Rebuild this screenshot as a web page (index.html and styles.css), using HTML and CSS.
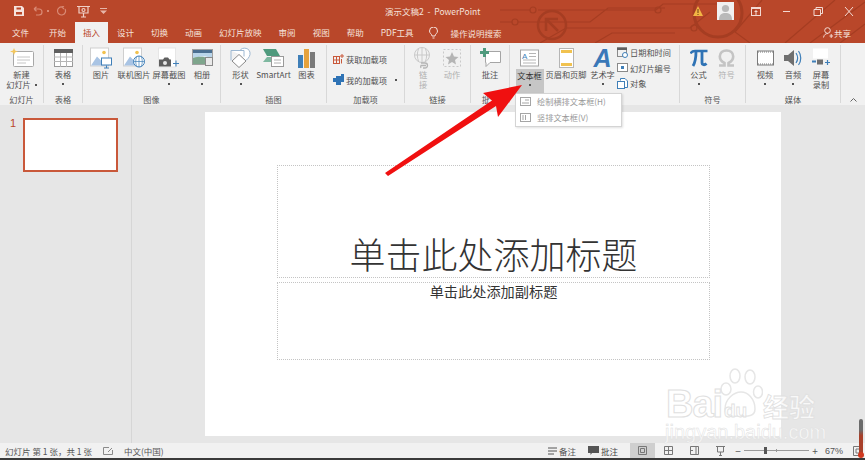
FILE: index.html
```html
<!DOCTYPE html>
<html lang="zh-CN">
<head>
    <meta charset="UTF-8">
    <title>演示文稿2 - PowerPoint</title>
    <link rel="stylesheet" href="styles.css">
</head>
<body>
<div class="app">
    <div class="head">
        <svg class="circuit" width="365" height="43" viewBox="0 0 365 43" fill="none" stroke="#a53d22" stroke-width="1.2">
            <path d="M0 10H30M38 10H156L163 4H230M0 22H12M18 22H90L108 8H165"/>
            <path d="M40 43L66 28H190L210 12M95 43L112 33H175M262 0L235 32L250 43M285 43L335 0M310 43L365 2M340 43L365 24"/>
            <circle cx="33" cy="10" r="3"/><circle cx="15" cy="22" r="3"/><circle cx="194" cy="28" r="3"/><circle cx="158" cy="10" r="3"/>
            <circle cx="52" cy="25" r="14" stroke-width="2.5"/>
            <path d="M46 31V19H58M46 19L58 31" stroke-width="2.5"/>
            <circle cx="218" cy="13" r="24" stroke-width="3"/>
        </svg>
        <div class="titlebar">
            <div class="qat">
                <svg width="10" height="10" viewBox="0 0 10 10"><path d="M0 0H8L10 2V10H0Z" fill="#f6e3dd"/><path d="M2.500 1.500H7V3.500H2.500ZM2 6H8V8.500H2Z" fill="#b9472a"/></svg>
                <svg width="10" height="10" viewBox="0 0 10 10" fill="none" stroke="#d98a75" stroke-width="1.2"><path d="M1 3H6A3 3 0 0 1 6 9H3M1 3L3.500 .8M1 3L3.500 5.200"/></svg>
                <span class="qat-dot"></span>
                <svg width="10" height="10" viewBox="0 0 10 10" fill="none" stroke="#d98a75" stroke-width="1.2"><path d="M8 3A4 4 0 1 1 5 1M5 1L7 0M5 1L7 3"/></svg>
                <svg class="qat-show" width="13" height="13" viewBox="0 0 13 13" fill="none" stroke="#f0cfc6" stroke-width="1.2"><path d="M0 1.500H13M2 2V8H11V2M6.500 8V12M4 12H9"/><circle cx="6.500" cy="5" r="1.500"/></svg>
                <svg class="qat-more" width="7" height="6" viewBox="0 0 7 6" fill="#e6b5a8"><path d="M0 0H7V1H0ZM0 2.500H7L3.500 6Z"/></svg>
            </div>
            <div class="doc-title">演示文稿2&nbsp; - &nbsp;PowerPoint</div>
            <div class="win">
                <svg class="warn" width="10" height="10" viewBox="0 0 10 10"><path d="M5 0L10 10H0Z" fill="#f2b544"/><path d="M4.500 3H5.500V7H4.500ZM4.500 8H5.500V9H4.500Z" fill="#6b3a10"/></svg>
                <svg class="avatar" width="17" height="18" viewBox="0 0 17 18"><rect width="17" height="18" fill="#f1f1f1"/><circle cx="8.500" cy="6.500" r="3.600" fill="#b9b9b9"/><path d="M2 18C2 12 5 11 8.500 11S15 12 15 18Z" fill="#b9b9b9"/></svg>
                <svg class="ctl" width="10" height="9" viewBox="0 0 10 9"><rect x=".5" y=".5" width="9" height="8" fill="none" stroke="#f3d9d2"/><path d="M0 0H10V2H0ZM5 3L7 5H3ZM4.500 5H5.500V8H4.500Z" fill="#f3d9d2"/></svg>
                <svg class="ctl" width="10" height="9" viewBox="0 0 10 9"><path d="M1 4.500H8" stroke="#f3d9d2"/></svg>
                <svg class="ctl" width="10" height="9" viewBox="0 0 10 9" fill="none" stroke="#f3d9d2"><path d="M3 2V.5H9.500V6.500H8M1 2.500H7.500V8.500H1Z"/></svg>
                <svg class="ctl" width="10" height="9" viewBox="0 0 10 9" stroke="#f3d9d2"><path d="M1 0L9 9M9 0L1 9"/></svg>
            </div>
        </div>
        <div class="tabs">
            <span class="tab tab-file">文件</span>
            <span class="tab">开始</span>
            <span class="tab active">插入</span>
            <span class="tab">设计</span>
            <span class="tab">切换</span>
            <span class="tab">动画</span>
            <span class="tab">幻灯片放映</span>
            <span class="tab">审阅</span>
            <span class="tab">视图</span>
            <span class="tab">帮助</span>
            <span class="tab">PDF工具</span>
            <span class="tell">
                <svg width="9" height="12" viewBox="0 0 9 12" fill="none" stroke="#f5e2dc"><path d="M3 9C3 7 .5 6.500 .5 4A4 4 0 0 1 8.500 4C8.500 6.500 6 7 6 9ZM3.500 11H5.500"/></svg>
                操作说明搜索
            </span>
            <span class="share">
                <svg width="10" height="11" viewBox="0 0 10 11" fill="none" stroke="#f3d9d2"><circle cx="4.500" cy="3.500" r="2.800"/><path d="M.5 10.500C1 7.500 3 6.500 5 6.500M6.500 9H10M8.200 7V11"/></svg>
                共享
            </span>
        </div>
    </div>

    <div class="ribbon">
        <div class="group g-slide">
            <div class="btns">
                <div class="btn">
                    <svg class="ico" width="24" height="20" viewBox="0 0 24 20"><rect x="3.500" y="3.500" width="20" height="15" rx="1" fill="#fff" stroke="#a8a8a8"/><path d="M7 9H20M7 12H20M7 15H16" stroke="#c6c6c6"/><path d="M4 0L5 2.500L8 3.500L5 4.500L4 7L3 4.500L0 3.500L3 2.500Z" fill="#f3c65c"/></svg>
                    <span>新建<br>幻灯片<i class="dot inline"></i></span>
                </div>
            </div>
            <div class="glabel">幻灯片</div>
        </div>
        <div class="group g-table">
            <div class="btns">
                <div class="btn">
                    <svg class="ico" width="19" height="18" viewBox="0 0 19 18"><rect x=".5" y=".5" width="18" height="17" fill="#fff" stroke="#9a9a9a"/><rect width="19" height="4" fill="#5f5f5f"/><path d="M0 8H19M0 12.500H19M6.500 4V18M12.500 4V18" stroke="#b5b5b5"/></svg>
                    <span>表格</span><i class="dot"></i>
                </div>
            </div>
            <div class="glabel">表格</div>
        </div>
        <div class="group g-image">
            <div class="btns">
                <div class="btn">
                    <svg class="ico" width="22" height="21" viewBox="0 0 22 21"><rect x=".5" y=".5" width="18" height="18" fill="#fff" stroke="#cfcfcf"/><path d="M1 18L7 9L12 14L14 12L18 18Z" fill="#a9c4e4"/><circle cx="14" cy="5" r="1.800" fill="#f1c24f"/><rect x="11.500" y="10.500" width="10" height="7" fill="#fff" stroke="#3f7fb8"/><path d="M16.500 18V20.500M14 20.500H19" stroke="#3f7fb8"/></svg>
                    <span>图片</span>
                </div>
                <div class="btn">
                    <svg class="ico" width="22" height="21" viewBox="0 0 22 21"><rect x=".5" y=".5" width="18" height="18" fill="#fff" stroke="#cfcfcf"/><path d="M1 18L7 9L12 14L14 12L18 18Z" fill="#a9c4e4"/><circle cx="14" cy="5" r="1.800" fill="#f1c24f"/><circle cx="16" cy="14" r="5.500" fill="#fff" stroke="#3f7fb8"/><path d="M10.500 14H21.500M16 8.500V19.500M13.500 9.500C12.500 12 12.500 16 13.500 18.500M18.500 9.500C19.500 12 19.500 16 18.500 18.500" stroke="#3f7fb8" fill="none" stroke-width=".7"/></svg>
                    <span>联机图片</span>
                </div>
                <div class="btn">
                    <svg class="ico" width="22" height="21" viewBox="0 0 22 21"><rect x=".5" y=".5" width="17" height="19" fill="#fff" stroke="#e6e6e6"/><path d="M1 12H5L6.500 10H10L11.500 12H13V19H1Z" fill="#5f5f5f"/><circle cx="7" cy="15.500" r="2" fill="#e8e8e8"/><path d="M15 16H21M18 13V19" stroke="#3f7fb8"/></svg>
                    <span>屏幕截图</span><i class="dot"></i>
                </div>
                <div class="btn">
                    <svg class="ico" width="21" height="18" viewBox="0 0 21 18"><rect x=".5" y=".5" width="20" height="15" fill="#fff" stroke="#a0a0a0"/><rect x="1" y="1" width="19" height="3" fill="#4b6f91"/><path d="M1 4H20V9C15 7 8 7 1 9Z" fill="#b9d5ea"/><path d="M1 9C8 7 12 8 15 9V15H1Z" fill="#7ea58c"/><rect x="13.500" y="8.500" width="7" height="8" fill="#e9e9e9" stroke="#8a8a8a"/></svg>
                    <span>相册</span><i class="dot"></i>
                </div>
            </div>
            <div class="glabel">图像</div>
        </div>
        <div class="group g-illus">
            <div class="btns">
                <div class="btn">
                    <svg class="ico" width="22" height="21" viewBox="0 0 22 21" fill="#fff" stroke="#9db8d2"><path d="M10 3C12 -1 21 0 20 7C19.500 10 17 12 15 14"/><path d="M1 3H14V9"/><path d="M1 3V13"/><path d="M9 7L16 13.500L9 20L2 13.500Z" stroke="#8a8a8a"/></svg>
                    <span>形状</span><i class="dot"></i>
                </div>
                <div class="btn">
                    <svg class="ico" width="21" height="20" viewBox="0 0 21 20"><path d="M0 1H13L17 8H4Z" fill="#4f9a7d"/><path d="M4 9H11L8 14H0Z" fill="#7eb8a0"/><rect x="8.500" y="8.500" width="12" height="10" fill="#fff" stroke="#9a9a9a"/><path d="M11 12H18M11 15H18" stroke="#b0b0b0"/></svg>
                    <span>SmartArt</span>
                </div>
                <div class="btn">
                    <svg class="ico" width="17" height="20" viewBox="0 0 17 20"><rect y="7" width="5" height="13" fill="#3f7fb8"/><rect x="6" y="1" width="5" height="19" fill="#e6a23c"/><rect x="12" y="4" width="5" height="16" fill="#7a7a7a"/></svg>
                    <span>图表</span>
                </div>
            </div>
            <div class="glabel">插图</div>
        </div>
        <div class="group g-addin">
            <div class="rows">
                <div class="row">
                    <svg width="11" height="10" viewBox="0 0 11 10" fill="none" stroke="#c9583a"><rect x=".5" y="2.500" width="6" height="7"/><path d="M.5 6H6.500M3.500 2.500V9.500M9 0V4M7 2H11M8.500 5V9.500"/></svg>
                    获取加载项
                </div>
                <div class="row">
                    <svg width="11" height="11" viewBox="0 0 11 11" fill="#2f73b5"><path d="M3 2H8V0H11V8H8V11H3V8H0V4H3Z"/></svg>
                    我的加载项<i class="dot caret"></i>
                </div>
            </div>
            <div class="glabel">加载项</div>
        </div>
        <div class="group g-link">
            <div class="btns">
                <div class="btn off">
                    <svg class="ico" width="18" height="22" viewBox="0 0 18 22" fill="none" stroke="#c9c9c9"><circle cx="8" cy="8" r="7.500"/><path d="M.5 8H15.500M8 .5V15.500M4.500 2C3 5 3 11 4.500 14M11.500 2C13 5 13 11 11.500 14"/><path d="M7 16H11A2.500 2.500 0 0 1 11 21H9M12 18.500H7A2.500 2.500 0 0 0 7 21" stroke="#b5b5b5" stroke-width="1.300"/></svg>
                    <span>链<br>接</span>
                </div>
                <div class="btn off">
                    <svg class="ico" width="18" height="18" viewBox="0 0 18 18"><rect x=".5" y=".5" width="17" height="17" fill="none" stroke="#c9c9c9" stroke-dasharray="2 2"/><path d="M9 3L11 7.500L15.500 8L12 11L13 15.500L9 13L5 15.500L6 11L2.500 8L7 7.500Z" fill="#b5b5b5"/></svg>
                    <span>动作</span>
                </div>
            </div>
            <div class="glabel">链接</div>
        </div>
        <div class="group g-comment">
            <div class="btns">
                <div class="btn">
                    <svg class="ico" width="21" height="20" viewBox="0 0 21 20"><path d="M5.500 3.500H20.500V14.500H10L6 18.500V14.500H5.500Z" fill="#fff" stroke="#a5a5a5"/><path d="M3 0H6V3H9V6H6V9H3V6H0V3H3Z" fill="#4f9a7d"/></svg>
                    <span>批注</span>
                </div>
            </div>
            <div class="glabel">批注</div>
        </div>
        <div class="group g-text">
            <div class="btns">
                <div class="btn">
                    <svg class="ico" width="19" height="17" viewBox="0 0 19 17"><rect x=".5" y=".5" width="18" height="16" fill="#fff" stroke="#a5a5a5"/><path d="M9 4H16M9 7H16M3 10.500H16M3 13.500H16" stroke="#b5b5b5"/><text x="2" y="9" class="ico-a">A</text></svg>
                    <span class="btn-on">文本框<i class="dot"></i></span>
                </div>
                <div class="btn">
                    <svg class="ico" width="15" height="20" viewBox="0 0 15 20"><rect x=".5" y=".5" width="14" height="19" fill="#fff" stroke="#b5b5b5"/><rect x="2" y="2" width="11" height="3" fill="#f1c24f"/><rect x="2" y="15" width="11" height="3" fill="#f1c24f"/></svg>
                    <span>页眉和页脚</span>
                </div>
                <div class="btn">
                    <div class="art ico">A</div>
                    <span>艺术字</span><i class="dot"></i>
                </div>
                <div class="rows small">
                    <div class="row">
                        <svg width="11" height="11" viewBox="0 0 11 11" fill="none" stroke="#8a8a8a"><rect x=".5" y=".5" width="9" height="9"/><path d="M0 2H10" stroke="#5f5f5f" stroke-width="2"/><circle cx="8" cy="8" r="2.500" fill="#fff" stroke="#3f7fb8"/></svg>
                        日期和时间
                    </div>
                    <div class="row">
                        <svg width="11" height="9" viewBox="0 0 11 9"><rect x=".5" y=".5" width="10" height="8" fill="#fff" stroke="#8a8a8a"/><rect x="4" y="3" width="3" height="3" fill="#3f7fb8"/></svg>
                        幻灯片编号
                    </div>
                    <div class="row">
                        <svg width="11" height="11" viewBox="0 0 11 11" fill="#fff" stroke="#3f7fb8"><path d="M3.500 2.500V.5H8L10.500 3V9.500H8"/><rect x=".5" y="3.500" width="7" height="7"/></svg>
                        对象
                    </div>
                </div>
            </div>
            <div class="glabel"></div>
        </div>
        <div class="group g-symbol">
            <div class="btns">
                <div class="btn">
                    <svg class="ico" width="18" height="18" viewBox="0 0 18 18" fill="none" stroke="#2f73b5"><path d="M.5 4.500C1.500 2.500 3 2 5 2H17.500" stroke-width="2.400"/><path d="M6 2.500C6 8 5.500 13 3 17" stroke-width="2.800"/><path d="M12 2.500V13.500C12 16 14.500 16.500 16.500 14.500" stroke-width="2.800"/></svg>
                    <span>公式</span><i class="dot"></i>
                </div>
                <div class="btn off">
                    <svg class="ico" width="17" height="18" viewBox="0 0 17 18" fill="none" stroke="#c4c4c4" stroke-width="2.600"><path d="M1 16.500H6.500V14C3.500 12.500 1.800 10.500 1.800 7.500C1.800 3.500 4.800 1.500 8.500 1.500S15.200 3.500 15.200 7.500C15.200 10.500 13.500 12.500 10.500 14V16.500H16"/></svg>
                    <span>符号</span>
                </div>
            </div>
            <div class="glabel">符号</div>
        </div>
        <div class="group g-media">
            <div class="btns">
                <div class="btn">
                    <svg class="ico" width="17" height="15" viewBox="0 0 17 15"><rect x=".5" y=".5" width="16" height="14" fill="#fff" stroke="#7a7a7a"/><path d="M1 1.500H16M1 13.500H16" stroke="#7a7a7a" stroke-dasharray="1 1"/></svg>
                    <span>视频</span><i class="dot"></i>
                </div>
                <div class="btn">
                    <svg class="ico" width="18" height="18" viewBox="0 0 18 18"><path d="M0 6H4L10 1V17L4 12H0Z" fill="#6f6f6f"/><path d="M12 4C14 7 14 11 12 14M14.500 2C17.500 6 17.500 12 14.500 16" fill="none" stroke="#3f7fb8" stroke-width="1.200"/></svg>
                    <span>音频</span><i class="dot"></i>
                </div>
                <div class="btn">
                    <svg class="ico" width="18" height="19" viewBox="0 0 18 19"><rect x="1" width="15" height="10" fill="#fff"/><rect y="12" width="4" height="2" fill="#3f7fb8"/><rect x="5" y="11" width="6" height="5" fill="#6f6f6f"/><path d="M13 14H18M15.500 11.500V16.500" stroke="#3f7fb8" stroke-width="1.200"/></svg>
                    <span>屏幕<br>录制</span>
                </div>
            </div>
            <div class="glabel">媒体</div>
        </div>
        <svg class="collapse" width="7" height="4" viewBox="0 0 7 4" fill="none" stroke="#666"><path d="M.5 3.500L3.500 .5L6.500 3.500"/></svg>
    </div>

    <div class="main">
        <div class="thumbs">
            <span class="thumb-no">1</span>
            <div class="thumb"></div>
        </div>
        <div class="stage">
            <div class="slide">
                <div class="ph ph-title">单击此处添加标题</div>
                <div class="ph ph-sub">单击此处添加副标题</div>
            </div>
        </div>
    </div>

    <div class="status">
        <span class="st-count">幻灯片 第 1 张，共 1 张</span>
        <svg class="st-note" width="10" height="8" viewBox="0 0 10 8" fill="none" stroke="#8a8a8a"><path d="M6 .5H.5V7.500H9.500V3M5 5L9 1"/></svg>
        <span>中文(中国)</span>
        <div class="st-right">
            <span class="st-item">
                <svg width="9" height="8" viewBox="0 0 9 8" fill="none" stroke="#555"><path d="M0 1H9M0 4H9M0 7H6"/></svg>
                备注
            </span>
            <span class="st-item st-comment">
                <svg width="11" height="9" viewBox="0 0 11 9" fill="#555"><path d="M0 0H11V7H4L2.500 9V7H0Z"/></svg>
                批注
            </span>
            <span class="view on"><svg width="9" height="9" viewBox="0 0 9 9" fill="none" stroke="#777"><path d="M.5 .5H8.500V8.500H.5ZM2.500 2.500H6.500V6.500H2.500Z"/></svg></span>
            <span class="view"><svg width="9" height="9" viewBox="0 0 9 9" fill="none" stroke="#777"><path d="M.5 .5H8.500V8.500H.5ZM.5 4.500H8.500M4.500 .5V8.500"/></svg></span>
            <span class="view"><svg width="9" height="9" viewBox="0 0 9 9" fill="none" stroke="#777"><path d="M.5 .5H8.500V8.500H.5ZM.5 4.500H3M6 .5V8.500"/></svg></span>
            <span class="view"><svg width="9" height="10" viewBox="0 0 9 10" fill="none" stroke="#777"><path d="M0 .5H9M1.500 1V6H7.500V1M4.500 6V9.500M3 9.500H6"/></svg></span>
            <span class="zoom-minus">−</span>
            <span class="slider"><b class="knob"></b><b class="tick"></b></span>
            <span class="zoom-plus">+</span>
            <span class="zoom-val">67%</span>
            <svg class="fit" width="10" height="10" viewBox="0 0 10 10" fill="none" stroke="#777"><path d="M.5 .5H9.500V9.500H.5ZM3 3H7V7H3Z"/></svg>
        </div>
    </div>

    <!-- 文本框下拉菜单 -->
    <div class="menu">
        <div class="menu-item">
            <svg width="11" height="9" viewBox="0 0 11 9" fill="none" stroke="#a5a5a5"><rect x=".5" y=".5" width="10" height="8"/><path d="M5 3H9M2 6H9"/></svg>
            绘制横排文本框(H)
        </div>
        <div class="menu-item">
            <svg width="11" height="9" viewBox="0 0 11 9" fill="none" stroke="#a5a5a5"><rect x=".5" y=".5" width="10" height="8"/><path d="M3 2V7M5.500 2V7"/></svg>
            竖排文本框(V)
        </div>
    </div>

    <svg class="arrow" width="150" height="100" viewBox="0 0 150 100">
        <path d="M0 89L107 16.500L98 9L137 1L113 33L111 22L3 92Z" fill="#f01010"/>
    </svg>

    <div class="mark">
        <svg class="paw" width="46" height="52" viewBox="0 0 46 52" fill="none" stroke="#e6e6e6" stroke-width="1.500">
            <ellipse cx="9" cy="21" rx="5" ry="6"/><ellipse cx="18" cy="8" rx="5" ry="7"/><ellipse cx="33" cy="9" rx="5" ry="7"/><ellipse cx="41" cy="24" rx="4.500" ry="6"/>
            <path d="M8 41C8 31 17 24 24 24S38 31 38 41C38 50 27 48 23 48S8 50 8 41Z"/>
        </svg>
        <div class="mark-row"><span class="mark-bai">Bai</span><span class="mark-du">du</span><span class="mark-cn">经验</span></div>
        <div class="mark-url">jingyan.baidu.com</div>
    </div>

    <div class="scroll-mark"><b></b></div>
</div>
</body>
</html>
```
FILE: styles.css
```css
* {
    margin: 0;
    padding: 0;
    box-sizing: border-box;
}

body {
    background: #e6e6e6;
    font-family: "Noto Sans CJK SC", "Liberation Sans", sans-serif;
    font-size: 8.5px;
    color: #444;
    overflow: hidden;
}

.app {
    position: relative;
    width: 865px;
    height: 460px;
    display: flex;
    flex-direction: column;
    overflow: hidden;
}

/* 标题栏 */
.head {
    position: relative;
    height: 43px;
    background: #b9472a;
    color: #f5e2dc;
    flex: none;
}

.circuit {
    position: absolute;
    right: 0;
    top: 0;
}

.titlebar {
    position: relative;
    height: 22px;
    display: flex;
    align-items: center;
}

.qat {
    flex: 0 0 385px;
    display: flex;
    align-items: center;
    padding-left: 14px;
}

.qat svg { margin-right: 9px; }
.qat .qat-show { margin-left: 1px; margin-right: 10px; }

.qat-dot {
    width: 2px;
    height: 2px;
    margin: 0 8px 0 -5px;
    background: #d98a75;
}

.doc-title {
    white-space: nowrap;
}

.win {
    margin-left: auto;
    display: flex;
    align-items: center;
    padding-right: 11px;
}

.warn { margin-right: 14px; }
.avatar { margin-right: 17px; }
.ctl { margin-left: 21px; }
.avatar + .ctl { margin-left: 0; }

.tabs {
    position: relative;
    height: 21px;
    display: flex;
    align-items: stretch;
    gap: 1px;
    padding-left: 4px;
}

.tab {
    padding: 0 8px;
    line-height: 20px;
    white-space: nowrap;
}

.tab-file { margin-right: 3px; }

.tab.active {
    background: #f1f1f1;
    color: #b9472a;
}

.tell {
    display: flex;
    align-items: center;
    gap: 13px;
    margin-left: 6px;
    white-space: nowrap;
}

.share {
    margin-left: auto;
    margin-right: 14px;
    display: flex;
    align-items: center;
    gap: 1px;
    color: #f5e2dc;
}

/* 功能区 */
.ribbon {
    position: relative;
    height: 62px;
    flex: none;
    background: #f1f1f1;
    display: flex;
    padding-top: 2px;
    font-size: 8.2px;
}

.group {
    display: flex;
    flex-direction: column;
    border-right: 1px solid #d8d8d8;
    height: 58px;
    flex: none;
    position: relative;
}

.g-slide { width: 44px; }
.g-table { width: 39px; }
.g-image { width: 138px; }
.g-illus { width: 106px; }
.g-addin { width: 78px; }
.g-link { width: 66px; }
.g-comment { width: 39px; }
.g-text { width: 170px; }
.g-symbol { width: 66px; }
.g-media { width: 95px; }

.btns {
    height: 48px;
    display: flex;
    justify-content: center;
}

.btn {
    width: 33px;
    display: flex;
    flex-direction: column;
    align-items: center;
    text-align: center;
    line-height: 10px;
    white-space: nowrap;
    padding-top: 2px;
    color: #505050;
}

.btn .ico {
    height: 22px;
    flex: none;
}

.dot {
    display: block;
    width: 2px;
    height: 2px;
    margin: 4px auto 0;
    background: #555;
}

.dot.inline {
    display: inline-block;
    margin: 0 0 1px 4px;
    vertical-align: middle;
}

.dot.caret {
    margin: 0 0 0 6px;
}

.btn.off { color: #b0b0b0; }

.g-image .btn:nth-child(3) { margin-left: 2px; }
.g-link .btn { width: 29px; }
.g-symbol .btn { width: 28px; }
.g-media .btn { width: 28px; }
.g-text .btns { justify-content: flex-start; padding-left: 5px; }
.g-text .btn { flex: none; width: 29px; }
.g-text .btn:nth-child(2) { width: 44px; }

.btn-on {
    display: block;
    background: #c6c6c6;
    width: 28px;
    height: 24px;
    padding-top: 1px;
    color: #333;
}

.ico-a {
    font-family: "Liberation Sans", sans-serif;
    font-size: 8px;
    fill: #3f7fb8;
}

.art {
    font-family: "Liberation Sans", sans-serif;
    font-size: 25px;
    font-style: italic;
    font-weight: bold;
    line-height: 22px;
    color: #3a78b8;
}

.glabel {
    position: absolute;
    left: 0;
    right: 0;
    top: 48px;
    height: 12px;
    line-height: 12px;
    text-align: center;
    color: #555;
    white-space: nowrap;
}

.rows {
    height: 48px;
    display: flex;
    flex-direction: column;
    justify-content: center;
    gap: 9px;
    padding: 0 0 0 6px;
}

.row {
    display: flex;
    align-items: center;
    gap: 2px;
    white-space: nowrap;
    line-height: 12px;
    color: #505050;
}

.rows.small {
    flex: none;
    justify-content: flex-start;
    gap: 3.5px;
    padding: 1px 0 0 0;
}

.collapse {
    position: absolute;
    right: 8px;
    bottom: 3px;
}

/* 主区域 */
.main {
    flex: 1;
    display: flex;
    min-height: 0;
}

.thumbs {
    width: 132px;
    flex: none;
    border-right: 1px solid #d6d6d6;
    display: flex;
    align-items: flex-start;
    padding: 13px 0 0 10px;
    gap: 7px;
}

.thumb-no {
    font-family: "Liberation Sans", sans-serif;
    font-size: 11px;
    line-height: 11px;
    color: #b9472a;
    width: 6px;
}

.thumb {
    width: 95px;
    height: 54px;
    background: #fff;
    border: 2px solid #c9583a;
}

.stage {
    flex: 1;
    padding: 7px 0 0 73px;
}

.slide {
    width: 576px;
    height: 324px;
    background: #fff;
    padding: 53px 71px 0 72px;
    display: flex;
    flex-direction: column;
    gap: 4px;
}

.ph {
    border: 1px dotted #c4c4c4;
    color: #333;
    text-align: center;
}

.ph-title {
    height: 113px;
    font-size: 36px;
    line-height: 50px;
    padding-top: 62px;
    font-weight: 300;
}

.ph-sub {
    height: 78px;
    font-size: 14.2px;
    line-height: 16px;
}

/* 状态栏 */
.status {
    height: 17px;
    flex: none;
    background: #f1f1f1;
    border-bottom: 2px solid #3a3a3a;
    display: flex;
    align-items: center;
    padding-left: 5px;
    color: #555;
    white-space: nowrap;
}

.st-count { width: 98px; }
.st-note { margin-right: 11px; }

.st-right {
    margin-left: auto;
    display: flex;
    align-items: center;
    height: 100%;
    padding-right: 2px;
}

.st-item {
    display: flex;
    align-items: center;
    gap: 2px;
}

.st-comment {
    margin-left: 12px;
    margin-right: 12px;
    color: #444;
}

.view {
    width: 25px;
    height: 100%;
    margin-right: 1px;
    display: flex;
    align-items: center;
    justify-content: center;
}

.view.on { background: #cfcfcf; }

.zoom-minus,
.zoom-plus {
    font-size: 10px;
    width: 8px;
    text-align: center;
}

.slider {
    position: relative;
    width: 65px;
    height: 1px;
    margin: 0 2px;
    background: #9a9a9a;
}

.knob {
    position: absolute;
    left: 20px;
    top: -3px;
    width: 3px;
    height: 7px;
    background: #555;
}

.tick {
    position: absolute;
    left: 32px;
    top: -1px;
    width: 1px;
    height: 3px;
    background: #9a9a9a;
}

.zoom-val {
    font-family: "Liberation Sans", sans-serif;
    font-size: 9px;
    margin-left: 6px;
}

.fit { margin-left: 10px; }

/* 下拉菜单 */
.menu {
    position: absolute;
    left: 515px;
    top: 93px;
    width: 107px;
    height: 34px;
    background: #fff;
    border: 1px solid #d4d4d4;
    box-shadow: 1px 1px 2px rgba(0,0,0,0.12);
    color: #999;
    font-size: 8.2px;
}

.menu-item {
    height: 16px;
    display: flex;
    align-items: center;
    gap: 6px;
    padding-left: 4px;
    white-space: nowrap;
    position: relative;
    top: -1px;
}

/* 红色箭头 */
.arrow {
    position: absolute;
    left: 385px;
    top: 84px;
}

/* 水印 */
.mark {
    position: absolute;
    left: 664px;
    top: 367px;
    width: 190px;
    height: 90px;
}

.paw {
    position: absolute;
    left: 53px;
    top: 1px;
}

.mark-row {
    position: absolute;
    left: 2px;
    top: 17px;
    display: flex;
    align-items: baseline;
    line-height: 40px;
    white-space: nowrap;
}

.mark-bai {
    font-family: "Liberation Sans", sans-serif;
    font-size: 38px;
    font-weight: bold;
    letter-spacing: -1px;
    color: rgba(255,255,255,0.75);
    -webkit-text-stroke: 1px #e0e0e0;
    width: 58px;
}

.mark-du {
    font-family: "Liberation Sans", sans-serif;
    font-size: 19px;
    font-weight: bold;
    color: rgba(255,255,255,0.75);
    -webkit-text-stroke: 0.8px #e0e0e0;
    width: 39px;
}

.mark-cn {
    font-size: 26px;
    font-weight: bold;
    color: rgba(255,255,255,0.75);
    -webkit-text-stroke: 0.8px #e0e0e0;
}

.mark-url {
    position: absolute;
    left: 1px;
    top: 55px;
    font-family: "Liberation Sans", sans-serif;
    font-size: 20px;
    line-height: 20px;
    color: rgba(255,255,255,0.8);
    -webkit-text-stroke: 0.5px #e0e0e0;
    white-space: nowrap;
}

.scroll-mark {
    position: absolute;
    left: 859px;
    top: 419px;
    width: 4px;
    height: 37px;
    border-radius: 2px;
    background: linear-gradient(#6b6b6b 0, #6b6b6b 30%, #a8402a 45%, #a8402a 100%);
}

.scroll-mark b {
    position: absolute;
    left: -1px;
    bottom: -2px;
    width: 6px;
    height: 6px;
    border-radius: 50%;
    background: #d0391f;
}
```
